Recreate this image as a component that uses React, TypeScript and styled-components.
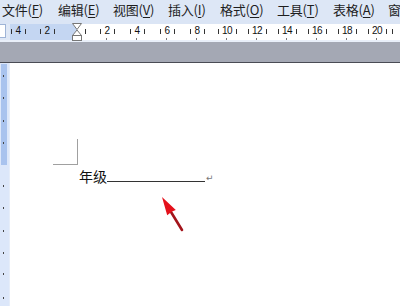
import React from "react";
import styled, { createGlobalStyle } from "styled-components";

const Global = createGlobalStyle`
  html, body { margin: 0; padding: 0; background: #ffffff; }
  body { font-family: "Noto Sans CJK SC", "Noto Sans", sans-serif; }
`;

const Frame = styled.div`
  width: 400px;
  height: 306px;
  overflow: hidden;
  display: flex;
  flex-direction: column;
  background: #fff;
`;

const MenuBar = styled.div`
  height: 20px;
  display: flex;
  align-items: center;
  gap: 12px;
  padding-left: 2px;
  padding-bottom: 2px;
  box-sizing: border-box;
  background: #dde7f6;
  font-family: "Noto Sans CJK SC", sans-serif;
  font-size: 13px;
  color: #1e1e1e;
  white-space: nowrap;
`;

const MenuItem = styled.span<{ w?: number }>`
  flex: 0 0 auto;
  width: ${(p) => p.w ?? 43}px;
  letter-spacing: -0.2px;
  u { text-decoration: underline; text-underline-offset: 2px; }
`;

const RulerZone = styled.div`
  height: 22px;
  background: linear-gradient(#dbe5f5 0 4px, #dfe8f6 4px 20px, #e9eff9 20px);
  padding-top: 4px;
  box-sizing: border-box;
`;

const RulerStrip = styled.div`
  height: 16px;
  display: flex;
  position: relative;
`;

const TabBox = styled.div`
  width: 6px;
  height: 14px;
  background: #fff;
  border: 1px solid #9fb4d6;
  border-left: none;
  box-sizing: border-box;
  margin-right: 4px;
`;

const MarginPart = styled.div`
  width: 67px;
  background: #c4d6f2;
`;

const TextPart = styled.div`
  flex: 1;
  background: #ffffff;
`;

const Mark = styled.span`
  position: absolute;
  top: 1px;
  font-family: "Liberation Sans", Arial, sans-serif;
  font-size: 10px;
  line-height: 12px;
  color: #111;
  transform: translateX(-50%);
  letter-spacing: -0.5px;
`;

const Tick = styled.span`
  position: absolute;
  width: 1px;
  background: #333;
`;

const GrayBand = styled.div`
  height: 20px;
  background: #a4a8b4;
  border-bottom: 1px solid #4a4c55;
`;

const Body = styled.div`
  flex: 1;
  display: flex;
`;

const VRuler = styled.div`
  width: 10px;
  background: #dce7fa;
  position: relative;
  border-right: 1px solid #e6edf9;
  box-sizing: border-box;
`;

const VStrip = styled.div`
  position: absolute;
  left: 1px;
  width: 6px;
  top: 1px;
  height: 101px;
  background: #a9c3ee;
`;

const Page = styled.div`
  flex: 1;
  position: relative;
  background: #fff;
`;

const Corner = styled.div`
  margin-left: 43px;
  margin-top: 76px;
  width: 24px;
  height: 25px;
  border-right: 1px solid #a0a0a0;
  border-bottom: 1px solid #a0a0a0;
`;

const Line = styled.div`
  margin-left: 69px;
  margin-top: -2px;
  height: 22px;
  display: flex;
  align-items: flex-end;
  font-family: "Noto Sans CJK SC", sans-serif;
  font-size: 14px;
  line-height: 18px;
  color: #111;
`;

const Blank = styled.span`
  display: inline-block;
  width: 98px;
  height: 1px;
  background: #333;
  margin-bottom: 3px;
`;

const Para = styled.span`
  font-family: "DejaVu Sans", sans-serif;
  font-size: 9px;
  color: #777;
  margin-left: 1px;
  align-self: flex-start;
  margin-top: 6px;
`;

const ArrowSvg = styled.svg`
  position: absolute;
  left: 148px;
  top: 130px;
`;

const menu: [string, string, number][] = [
  ["文件(", "F", 44],
  ["编辑(", "E", 43],
  ["视图(", "V", 43],
  ["插入(", "I", 40],
  ["格式(", "O", 45],
  ["工具(", "T", 44],
  ["表格(", "A", 43],
];

const labels: [number, string][] = [
  [18, "4"], [47, "2"], [107, "2"], [137, "4"], [167, "6"], [197, "8"],
  [227, "10"], [257, "12"], [287, "14"], [317, "16"], [347, "18"], [377, "20"],
];

const vTicks = [12, 34, 57, 79, 122, 144, 167, 189, 210, 234];

export default function App() {
  const smallTicks: number[] = [];
  labels.forEach(([x, s]) => {
    const off = s.length > 1 ? 9 : 7;
    smallTicks.push(x - off, x + off);
  });
  smallTicks.push(85, 392);
  return (
    <>
      <Global />
      <Frame>
        <MenuBar>
          {menu.map(([a, k, w]) => (
            <MenuItem key={k} w={w}>
              {a}
              <u>{k}</u>)
            </MenuItem>
          ))}
          <MenuItem w={20}>窗</MenuItem>
        </MenuBar>
        <RulerZone>
          <RulerStrip>
            <TabBox />
            <MarginPart />
            <TextPart />
            {labels.map(([x, s]) => (
              <Mark key={x} style={{ left: x }}>{s}</Mark>
            ))}
            {smallTicks.map((x) => (
              <Tick key={"t" + x} style={{ left: x, top: 5, height: 5 }} />
            ))}
            {labels.filter(([x]) => x > 80).map(([x]) => (
              <Tick key={"b" + x} style={{ left: x - 1, top: 14, height: 2, background: "#777" }} />
            ))}
            <svg width="12" height="18" viewBox="0 0 12 18" style={{ position: "absolute", left: 71, top: -1 }}>
              <path d="M1.5 0.5 H10.5 L6 6.5 Z" fill="#fff" stroke="#777" />
              <path d="M6 7 L10.5 12.5 H1.5 Z" fill="#fff" stroke="#777" />
              <rect x="1.5" y="12.5" width="9" height="5" fill="#fff" stroke="#777" />
            </svg>
          </RulerStrip>
        </RulerZone>
        <GrayBand />
        <Body>
          <VRuler>
            <VStrip />
            {vTicks.map((y) => (
              <Tick key={y} style={{ left: 3, top: y, height: 2, background: "#444" }} />
            ))}
          </VRuler>
          <Page>
            <Corner />
            <Line>
              年级<Blank /><Para>↵</Para>
            </Line>
            <ArrowSvg width="32" height="42" viewBox="0 0 32 42">
              <path d="M13 19 L24 37" stroke="#a3141b" strokeWidth="2.6" strokeLinecap="round" />
              <path d="M4 4 L17.8 17 L14 18.5 L9.2 22.3 Z" fill="#e4111b" />
            </ArrowSvg>
          </Page>
        </Body>
      </Frame>
    </>
  );
}
